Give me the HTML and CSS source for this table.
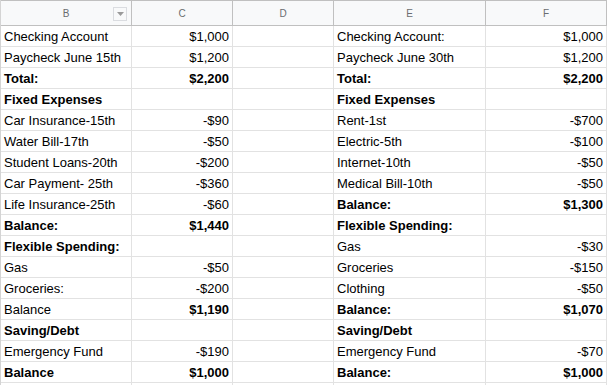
FILE: index.html
```html
<!DOCTYPE html>
<html>
<head>
<meta charset="utf-8">
<link rel="stylesheet" href="styles.css">
</head>
<body>
<div class="sheet">
  <div class="hd hb">B<span class="filter"><svg width="7" height="4" viewBox="0 0 7 4"><path d="M0 0h7L3.5 4z" fill="#9a9a9a"/></svg></span></div>
  <div class="hd">C</div>
  <div class="hd">D</div>
  <div class="hd">E</div>
  <div class="hd">F</div>

  <div class="c">Checking Account</div><div class="c r">$1,000</div><div class="c"></div><div class="c">Checking Account:</div><div class="c r">$1,000</div>
  <div class="c">Paycheck June 15th</div><div class="c r">$1,200</div><div class="c"></div><div class="c">Paycheck June 30th</div><div class="c r">$1,200</div>
  <div class="c b">Total:</div><div class="c r b">$2,200</div><div class="c"></div><div class="c b">Total:</div><div class="c r b">$2,200</div>
  <div class="c b">Fixed Expenses</div><div class="c"></div><div class="c"></div><div class="c b">Fixed Expenses</div><div class="c"></div>
  <div class="c">Car Insurance-15th</div><div class="c r">-$90</div><div class="c"></div><div class="c">Rent-1st</div><div class="c r">-$700</div>
  <div class="c">Water Bill-17th</div><div class="c r">-$50</div><div class="c"></div><div class="c">Electric-5th</div><div class="c r">-$100</div>
  <div class="c">Student Loans-20th</div><div class="c r">-$200</div><div class="c"></div><div class="c">Internet-10th</div><div class="c r">-$50</div>
  <div class="c">Car Payment- 25th</div><div class="c r">-$360</div><div class="c"></div><div class="c">Medical Bill-10th</div><div class="c r">-$50</div>
  <div class="c">Life Insurance-25th</div><div class="c r">-$60</div><div class="c"></div><div class="c b">Balance:</div><div class="c r b">$1,300</div>
  <div class="c b">Balance:</div><div class="c r b">$1,440</div><div class="c"></div><div class="c b">Flexible Spending:</div><div class="c"></div>
  <div class="c b">Flexible Spending:</div><div class="c"></div><div class="c"></div><div class="c">Gas</div><div class="c r">-$30</div>
  <div class="c">Gas</div><div class="c r">-$50</div><div class="c"></div><div class="c">Groceries</div><div class="c r">-$150</div>
  <div class="c">Groceries:</div><div class="c r">-$200</div><div class="c"></div><div class="c">Clothing</div><div class="c r">-$50</div>
  <div class="c">Balance</div><div class="c r b">$1,190</div><div class="c"></div><div class="c b">Balance:</div><div class="c r b">$1,070</div>
  <div class="c b">Saving/Debt</div><div class="c"></div><div class="c"></div><div class="c b">Saving/Debt</div><div class="c"></div>
  <div class="c">Emergency Fund</div><div class="c r">-$190</div><div class="c"></div><div class="c">Emergency Fund</div><div class="c r">-$70</div>
  <div class="c b">Balance</div><div class="c r b">$1,000</div><div class="c"></div><div class="c b">Balance:</div><div class="c r b">$1,000</div>
  <div class="c"></div><div class="c"></div><div class="c"></div><div class="c"></div><div class="c"></div>
</div>
</body>
</html>
```

FILE: styles.css
```css
html, body {
  margin: 0;
  padding: 0;
  background: #ffffff;
  overflow: hidden;
}
.sheet {
  display: grid;
  grid-template-columns: 131px 101px 101px 152px 121px;
  grid-auto-rows: 21px;
  grid-template-rows: 26px;
  font-family: "Liberation Sans", Arial, sans-serif;
  font-size: 13px;
  color: #000;
  border-left: 1px solid #d4d4d4;
  width: max-content;
}
.hd {
  position: relative;
  background: #f8f9fa;
  border-top: 1px solid #c0c0c0;
  border-right: 1px solid #c0c0c0;
  border-bottom: 1px solid #c0c0c0;
  display: flex;
  align-items: center;
  justify-content: center;
  font-size: 10px;
  color: #6a6d70;
  box-sizing: border-box;
  padding-top: 1px;
}
.filter {
  position: absolute;
  left: 112px;
  top: 6px;
  width: 12px;
  height: 12px;
  border: 1px solid #dadce0;
  display: flex;
  align-items: center;
  justify-content: center;
  background: #f8f9fa;
}
.c {
  box-sizing: border-box;
  border-right: 1px solid #e2e2e2;
  border-bottom: 1px solid #e2e2e2;
  padding: 1px 3px 0 3px;
  line-height: 20px;
  white-space: nowrap;
  overflow: hidden;
}
.r { text-align: right; }
.b { font-weight: bold; }
```
